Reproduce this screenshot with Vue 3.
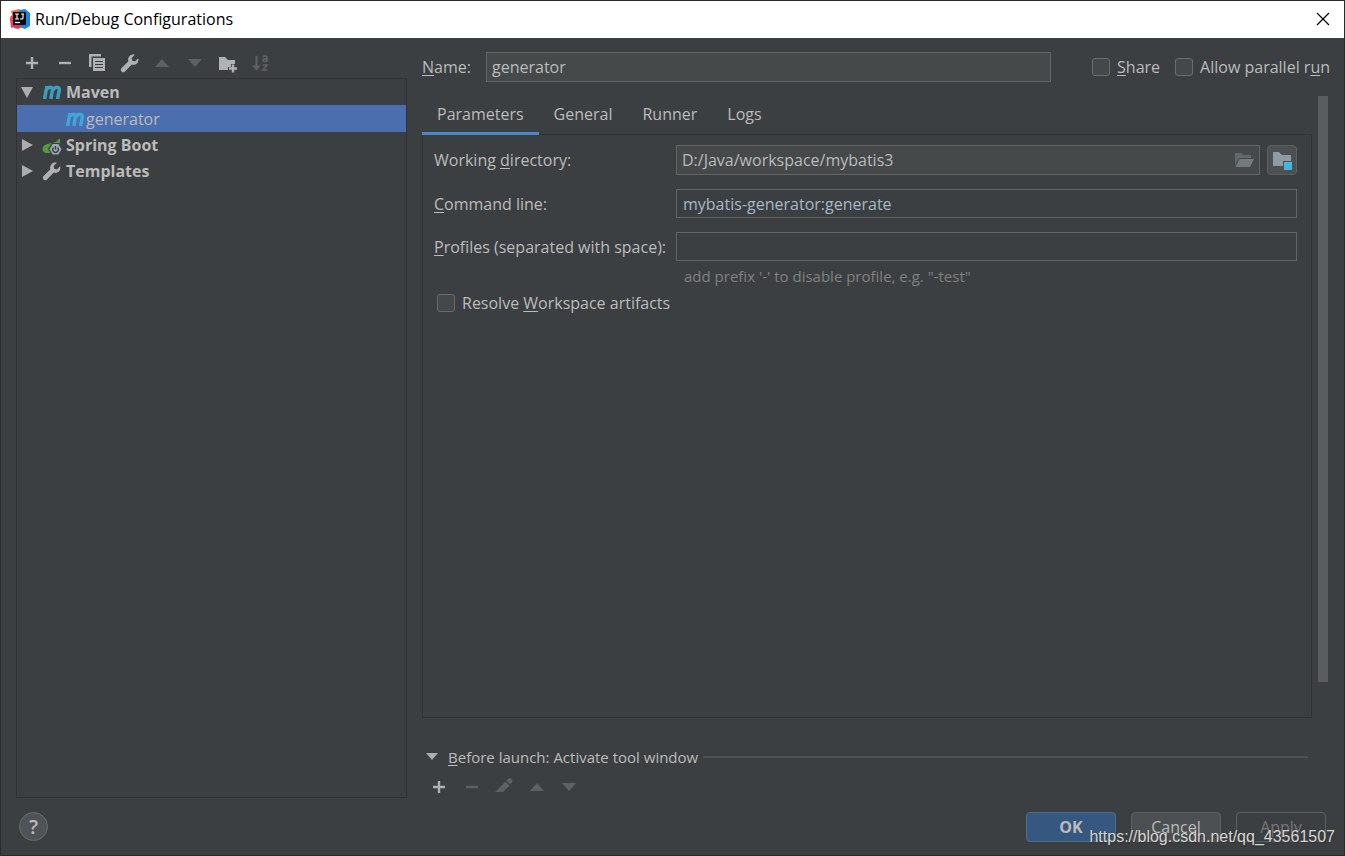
<script setup>
import { ref } from 'vue'

const name = ref('generator')
const directory = ref('D:/Java/workspace/mybatis3')
const command = ref('mybatis-generator:generate')
const profiles = ref('')
const share = ref(false)
const parallel = ref(false)
const resolve = ref(false)
const tabs = ['Parameters', 'General', 'Runner', 'Logs']
const active = ref('Parameters')
</script>

<template>
  <div class="dialog">
    <header class="titlebar">
      <svg class="logo" viewBox="0 0 20 20" aria-hidden="true">
        <path d="M1 2 9 0l4 3-7 11-5-1L0 8l2-2z" fill="#f0713c" />
        <path d="M0 10l5-7 4 6-5 9-3 1z" fill="#ef3a6d" />
        <path d="M9 1 15 0l5 4v13l-5 3-8-3z" fill="#1c83e8" />
        <path d="M2 16 8 15l4 3-4 2-4-1z" fill="#d8385f" />
        <path d="M3 3h13v13H3z" fill="#0b0b0d" />
        <path d="M5 5h4M7 5v5M5 10h4M11 5h3M13 5v4q0 1-1 1h-2" stroke="#fff" stroke-width="1.100" fill="none" />
        <path d="M5 13.500h5" stroke="#fff" stroke-width="1.300" />
      </svg>
      <h1>Run/Debug Configurations</h1>
      <button class="close" aria-label="Close">
        <svg viewBox="0 0 14 14"><path d="M1 1l12 12M13 1 1 13" stroke="#000" stroke-width="1.200" /></svg>
      </button>
    </header>

    <main class="body">
      <aside class="side">
        <div class="toolbar">
          <button aria-label="Add"><svg viewBox="0 0 20 20"><path d="M10 4v12M4 10h12" stroke="#afb1b3" stroke-width="2.400" /></svg></button>
          <button aria-label="Remove"><svg viewBox="0 0 20 20"><path d="M4 10h12" stroke="#afb1b3" stroke-width="2.400" /></svg></button>
          <button aria-label="Copy">
            <svg viewBox="0 0 20 20">
              <path d="M2 1h12v2.500H4.500V14H2z" fill="#afb1b3" />
              <path d="M6 5h12v13H6z" fill="#afb1b3" />
              <path d="M8 8.500h8M8 11.500h8M8 14.500h8" stroke="#3c3f41" stroke-width="1.200" />
            </svg>
          </button>
          <button aria-label="Edit templates">
            <svg viewBox="0 0 20 20"><path d="M18.200 5.200 15 8.400 12.200 7.800 11.600 5 14.800 1.800C12.800 1.200 10.600 1.800 9.200 3.400 8 4.800 7.800 6.600 8.400 8.200L1.600 15a2.200 2.200 0 0 0 3.400 3.400L11.800 11.600C13.400 12.200 15.200 12 16.600 10.800 18.200 9.400 18.800 7.200 18.200 5.200z" fill="#afb1b3" /></svg>
          </button>
          <button aria-label="Move up" disabled><svg viewBox="0 0 20 20"><path d="M10 6l7 8H3z" fill="#5e6061" /></svg></button>
          <button aria-label="Move down" disabled><svg viewBox="0 0 20 20"><path d="M10 14l7-8H3z" fill="#5e6061" /></svg></button>
          <button aria-label="New folder">
            <svg viewBox="0 0 20 20">
              <path d="M2 4h6l3 3h7v4h-4v3h-3v3H2z" fill="#afb1b3" />
              <path d="M16 11.500v8M12 15.500h8" stroke="#afb1b3" stroke-width="2.400" />
            </svg>
          </button>
          <button aria-label="Sort" disabled>
            <svg viewBox="0 0 20 20">
              <path d="M5.500 3h2v9.500H11l-4.500 5L2 12.500h3.500z" fill="#5e6061" />
              <path d="M13 3.500q4-1.500 4 1V9M17 6q-4-.5-4 1.300 0 2.200 4 .5M12.500 12H17l-4 5h4.500" stroke="#5e6061" stroke-width="1.700" fill="none" />
            </svg>
          </button>
        </div>
        <ul class="tree">
          <li>
            <svg class="arrow" viewBox="0 0 12 12"><path d="M0 1h12L6 12z" fill="#adadad" /></svg>
            <svg class="icon" viewBox="0 0 20 20"><g class="maven"><path d="M5 4 2.500 17M4.200 8Q7 4.500 9.500 5.500q1.300.8.8 3L8.900 17M10.700 8q3-3.500 5.500-2.500 1.500.8 1 3L15.600 17" /></g></svg>
            <b>Maven</b>
          </li>
          <li class="selected">
            <svg class="icon" viewBox="0 0 20 20"><g class="maven"><path d="M5 4 2.500 17M4.200 8Q7 4.500 9.500 5.500q1.300.8.8 3L8.900 17M10.700 8q3-3.500 5.500-2.500 1.500.8 1 3L15.600 17" /></g></svg>
            <span>generator</span>
          </li>
          <li>
            <svg class="arrow" viewBox="0 0 12 12"><path d="M1 0v12l11-6z" fill="#adadad" /></svg>
            <svg class="icon" viewBox="0 0 20 20">
              <path d="M17.500 3c1 3 1 6-1 8l-4 3-3 4H4c-4-1-5-5-1-8 4-3 10 0 14.500-7z" fill="#579a3c" />
              <path d="M9.500 8h8l4 6-4 6h-8L6 14z" fill="#3c3f41" />
              <path d="M10.700 9h5.600l3.200 5.200-3.200 5.300h-5.600l-3.200-5.300z" fill="#9aa7b0" />
              <path d="M11.500 12.500a2.800 2.800 0 1 0 4 0M13.500 11v3.500" stroke="#3c3f41" stroke-width="1.300" fill="none" />
            </svg>
            <b>Spring Boot</b>
          </li>
          <li>
            <svg class="arrow" viewBox="0 0 12 12"><path d="M1 0v12l11-6z" fill="#adadad" /></svg>
            <svg class="icon" viewBox="0 0 20 20"><path d="M18.200 5.200 15 8.400 12.200 7.800 11.600 5 14.800 1.800C12.800 1.200 10.600 1.800 9.200 3.400 8 4.800 7.800 6.600 8.400 8.200L1.600 15a2.200 2.200 0 0 0 3.400 3.400L11.800 11.600C13.400 12.200 15.200 12 16.600 10.800 18.200 9.400 18.800 7.200 18.200 5.200z" fill="#afb1b3" /></svg>
            <b>Templates</b>
          </li>
        </ul>
      </aside>

      <section class="editor">
        <div class="name-row">
          <label class="name-label" for="name"><u>N</u>ame:</label>
          <input id="name" v-model="name" class="field filled" type="text" />
          <label class="check"><input v-model="share" type="checkbox" /><span><u>S</u>hare</span></label>
          <label class="check"><input v-model="parallel" type="checkbox" /><span>Allow parallel r<u>u</u>n</span></label>
        </div>

        <div class="scroll">
          <div class="content">
            <div class="tabs" role="tablist">
              <button v-for="t in tabs" :key="t" role="tab" :aria-selected="t === active" :class="{ on: t === active }" @click="active = t">{{ t }}</button>
            </div>
            <div class="panel">
              <div class="form">
                <label for="dir">Working <u>d</u>irectory:</label>
                <div class="dir">
                  <div class="field filled combo">
                    <input id="dir" v-model="directory" type="text" />
                    <button aria-label="Browse">
                      <svg viewBox="0 0 20 16"><path d="M1 13V1h6l2 2h8v3H5z" fill="#63686b" /><path d="M5.500 7H20l-4 8H1.500z" fill="#747a7e" /></svg>
                    </button>
                  </div>
                  <button class="module" aria-label="Choose module">
                    <svg viewBox="0 0 20 20"><path d="M1 2h6l3 3h9v6h-8v5H1z" fill="#8e9ba4" /><path d="M12 12h8v8h-8z" fill="#40b6e0" /></svg>
                  </button>
                </div>
                <label for="cmd"><u>C</u>ommand line:</label>
                <input id="cmd" v-model="command" class="field" type="text" />
                <label for="prof"><u>P</u>rofiles (separated with space):</label>
                <input id="prof" v-model="profiles" class="field" type="text" />
              </div>
              <p class="hint">add prefix '-' to disable profile, e.g. "-test"</p>
              <label class="check resolve"><input v-model="resolve" type="checkbox" /><span>Resolve <u>W</u>orkspace artifacts</span></label>
            </div>
            <div class="before">
              <svg viewBox="0 0 12 12"><path d="M0 2h12L6 9z" fill="#adadad" /></svg>
              <h2><u>B</u>efore launch: Activate tool window</h2>
              <hr />
            </div>
            <div class="toolbar small">
              <button aria-label="Add task"><svg viewBox="0 0 20 20"><path d="M10 4v12M4 10h12" stroke="#afb1b3" stroke-width="2.400" /></svg></button>
              <button aria-label="Remove task" disabled><svg viewBox="0 0 20 20"><path d="M4 10h12" stroke="#5e6061" stroke-width="2.400" /></svg></button>
              <button aria-label="Edit task" disabled><svg viewBox="0 0 20 20"><path d="M1 15 11.500 4.500l4 4L9 15H1zM12.500 3.500l2-2q1.500-1 3 .5t.500 3.500l-2 2z" fill="#5e6061" /></svg></button>
              <button aria-label="Task up" disabled><svg viewBox="0 0 20 20"><path d="M10 6l7 8H3z" fill="#5e6061" /></svg></button>
              <button aria-label="Task down" disabled><svg viewBox="0 0 20 20"><path d="M10 14l7-8H3z" fill="#5e6061" /></svg></button>
            </div>
          </div>
          <div class="track"><div class="thumb"></div></div>
        </div>
      </section>
    </main>

    <footer class="footer">
      <button class="help" aria-label="Help">?</button>
      <div class="actions">
        <button class="btn primary">OK</button>
        <button class="btn">Cancel</button>
        <button class="btn off" disabled>Apply</button>
      </div>
      <span class="mark">https://blog.csdn.net/qq_43561507</span>
    </footer>
  </div>
</template>

<style>
body {
  background: #3c3f41;
}
</style>

<style scoped>
* {
  box-sizing: border-box;
}
.dialog {
  display: flex;
  flex-direction: column;
  min-height: 100vh;
  border: 1px solid #2b2b2b;
  background: #3c3f41;
  color: #bbbbbb;
  font: 16px/20px "Open Sans", "Noto Sans", sans-serif;
}
button,
input {
  font: inherit;
  color: inherit;
  margin: 0;
}
button {
  padding: 0;
  border: 0;
  background: none;
}
svg {
  display: block;
  flex: none;
}
u {
  text-underline-offset: 2px;
}
.titlebar {
  display: flex;
  align-items: center;
  height: 37px;
  padding: 0 14px 2px 9px;
  background: #fff;
  color: #000;
}
.logo {
  width: 20px;
  height: 20px;
}
h1 {
  flex: 1;
  margin: 0 0 0 5px;
  font-size: 16px;
  font-weight: 400;
}
.close svg {
  width: 14px;
  height: 14px;
}
.body {
  display: flex;
  flex: 1;
  gap: 15px;
  padding: 0 14px 0 15px;
}
.side {
  display: flex;
  flex-direction: column;
  flex: none;
  width: 391px;
}
.toolbar {
  display: flex;
  align-items: center;
  justify-content: space-between;
  width: 248px;
  height: 40px;
  margin-left: 6px;
  padding-top: 9px;
}
.toolbar svg {
  width: 20px;
  height: 20px;
}
.tree {
  flex: 1;
  margin: 0;
  padding: 0;
  border: 1px solid #323232;
  list-style: none;
}
.tree li {
  display: flex;
  align-items: center;
  height: 26px;
  padding-left: 4px;
}
.tree li.selected {
  height: 27px;
  padding-left: 48px;
  background: #4b6eaf;
}
.tree .arrow {
  width: 12px;
  height: 12px;
  margin-right: 9px;
}
.tree .icon {
  width: 20px;
  height: 20px;
  margin-right: 4px;
}
.tree .selected .icon {
  margin-right: 1px;
}
.maven {
  fill: none;
  stroke: #3e9cbf;
  stroke-width: 3.5;
}
.selected .maven {
  stroke: #40a5d8;
}
.editor {
  display: flex;
  flex-direction: column;
  flex: 1;
  min-width: 0;
  padding-top: 14px;
}
.name-row {
  display: flex;
  align-items: center;
}
.name-label {
  width: 64px;
}
.field {
  width: 100%;
  min-width: 0;
  height: 29px;
  padding: 0 6px;
  border: 1px solid #646464;
  border-radius: 0;
  background: transparent;
  outline: 0;
}
.field.filled {
  height: 30px;
  padding: 0 5px;
  background: #45494a;
}
.name-row .field {
  flex: 1;
  margin-right: 26px;
}
.check {
  display: flex;
  align-items: center;
  gap: 7px;
  margin-left: 15px;
}
.check input {
  appearance: none;
  width: 18px;
  height: 18px;
  border: 1px solid #6b6b6b;
  border-radius: 3px;
  background: #43494a;
}
.scroll {
  display: flex;
  flex: 1;
  gap: 6px;
  margin-top: 14px;
}
.content {
  display: flex;
  flex-direction: column;
  flex: 1;
  min-width: 0;
}
.track {
  width: 10px;
  margin-right: 2px;
}
.thumb {
  height: 586px;
  background: #5b5c5d;
}
.tabs {
  z-index: 1;
  display: flex;
  height: 38px;
}
.tabs button {
  height: 39px;
  padding: 0 15px;
  border-bottom: 3px solid transparent;
}
.tabs button.on {
  border-color: #4a88c7;
}
.panel {
  flex: 1;
  padding: 10px 14px 0 11px;
  border: 1px solid #323232;
}
.form {
  display: grid;
  grid-template-columns: 242px 1fr;
  align-items: center;
  row-gap: 14px;
}
.dir {
  display: flex;
  gap: 7px;
}
.combo {
  display: flex;
  flex: 1;
  align-items: center;
}
.combo input {
  flex: 1;
  min-width: 0;
  padding: 0;
  border: 0;
  background: none;
  outline: 0;
}
.combo svg {
  width: 20px;
  height: 16px;
}
#cmd {
  color: #a9b7c6;
}
.module {
  display: grid;
  place-items: center;
  width: 30px;
  height: 30px;
  border: 1px solid #5e6060;
  border-radius: 4px;
  background: #4c5052;
}
.module svg {
  width: 20px;
  height: 20px;
}
.hint {
  margin: 5px 0 0 250px;
  color: #808080;
  font-size: 15px;
}
.check.resolve {
  margin: 7px 0 0 3px;
}
.before {
  display: flex;
  align-items: center;
  margin-top: 29px;
  padding: 0 4px;
}
.before svg {
  width: 12px;
  height: 12px;
}
h2 {
  margin: 0 5px 0 10px;
  font-size: 15px;
  font-weight: 400;
}
hr {
  flex: 1;
  height: 2px;
  margin: 0;
  border: 0;
  background: #515151;
}
.toolbar.small {
  width: 150px;
  height: 31px;
  margin-left: 7px;
}
.footer {
  position: relative;
  display: flex;
  justify-content: space-between;
  padding: 14px 18px 13px;
}
.help {
  width: 29px;
  height: 29px;
  border: 1px solid #6a6d6f;
  border-radius: 50%;
  background: #4f5355;
  font-size: 20px;
  font-weight: 600;
}
.actions {
  display: flex;
  gap: 15px;
}
.btn {
  width: 90px;
  height: 30px;
  border: 1px solid #5e6060;
  border-radius: 4px;
  background: #4c5052;
}
.btn.primary {
  border-color: #4c708c;
  background: #365880;
  font-weight: 700;
}
.btn.off {
  background: transparent;
  color: #777777;
}
.mark {
  position: absolute;
  right: 9px;
  bottom: 8px;
  color: #d5d5d5;
  font: 16px/20px "Liberation Sans", Arial, sans-serif;
  text-shadow: 1px 1px 1px #333;
}
</style>
